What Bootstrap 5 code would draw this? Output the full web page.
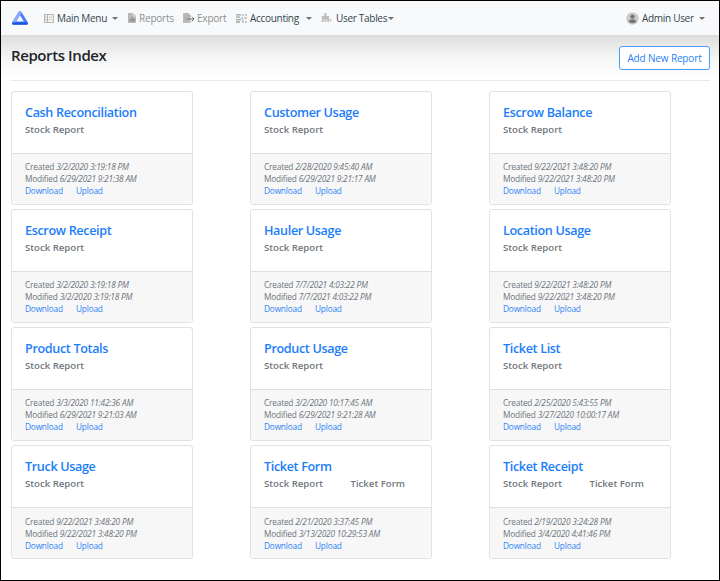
<!DOCTYPE html>
<html lang="en">
<head>
<meta charset="utf-8">
<meta name="viewport" content="width=device-width, initial-scale=1">
<title>Reports Index</title>
<link href="https://cdn.jsdelivr.net/npm/bootstrap@5.3.0/dist/css/bootstrap.min.css" rel="stylesheet">
<style>
body{font-family:"Open Sans","Noto Sans",sans-serif;background:#fff;color:#212529}
.frame{height:581px;border:1px solid #000;overflow:hidden}
.topbar{height:34px;background:#f8f9fb;padding:0 14px 0 10px}
.topbar svg{flex:none}
.topbar .nav-link{font-size:10px;line-height:14px;padding:0;letter-spacing:-.3px;color:#34454f;white-space:nowrap;display:flex;align-items:center}
.topbar .nav-link span{flex:none}
.topbar .nav-link.muted{color:#8c9092;letter-spacing:-.2px}
.caret{width:0;height:0;border:3px solid transparent;border-top-color:#6c7072;border-bottom:0;flex:none}
#n1{margin-left:15px}#n1 span{margin-left:3px;width:55px}
#n2{margin-left:10px}#n2 span{margin-left:3px;width:35px}
#n3{margin-left:9px}#n3 span{margin-left:2px;width:29px}
#n4{margin-left:10px}#n4 span{margin-left:3px;width:56px}
#n5{margin-left:9px}#n5 span{margin-left:4px;width:52px}
#n6 span{margin-left:3px;width:57px}
.page-area{height:545px;padding:0 9px 0 10px;background:linear-gradient(#dcdcdc,#e6e6e6 8px,#f6f6f6 24px,#fff 42px)}
.page-head{height:46px;border-bottom:1px solid #e9e9e9;padding-top:11px}
.page-head h1{font-size:15px;line-height:18px;font-weight:600;letter-spacing:-.4px}
.btn-add{width:91px;height:24px;padding:0;font-size:10px;letter-spacing:-.15px;line-height:22px;border:1px solid #4d9bff;color:#2b83f6;border-radius:3px;background:#fff;white-space:nowrap}
.report-grid{display:grid;grid-template-columns:repeat(3,182px);column-gap:57px;grid-auto-rows:114px;row-gap:4.3px;padding-top:9.6px}
.report-card{border:1px solid #e1e1e1;border-radius:3px;overflow:hidden}
.report-card .card-body{padding:12px 13px 0;height:61px;flex:none}
.report-card h2{font-size:12.6px;line-height:17px;letter-spacing:-.35px;margin:0;font-weight:600;white-space:nowrap}
.report-card h2 a{color:#1a7dfa}
.kind{font-size:9.6px;line-height:14px;font-weight:600;color:#70777d;margin-top:2px;white-space:nowrap}
.kind span{display:inline-block;width:86.5px}
.report-card .card-footer{flex:1;background:#f7f7f7;border-top:1px solid #dfdfdf;padding:7.2px 13px 0;font-size:8.3px;letter-spacing:-.19px;line-height:12px;color:#6c757d;white-space:nowrap}
.report-card .card-footer a{color:#2b83f6;display:inline-block}
.report-card .card-footer a:first-child{width:51px}
</style>
<script src="https://cdn.jsdelivr.net/npm/bootstrap@5.3.0/dist/js/bootstrap.bundle.min.js"></script>
</head>
<body>
<div class="frame">
<nav class="topbar d-flex align-items-center">
<a href="#" class="d-flex" aria-label="Home"><svg width="18" height="16" viewBox="0 0 18 16"><path d="M9 2.5 2.5 13h13z" fill="none" stroke="#4a7dfa" stroke-width="3" stroke-linejoin="round"/><path d="M9 2.5 2.5 13" stroke="#8eaafc" stroke-width="3" stroke-linecap="round"/><path d="M2.5 13.5h13" stroke="#1e54e8" stroke-width="2.6" stroke-linecap="round"/></svg></a>
<a href="#" class="nav-link" id="n1"><svg width="10" height="9" viewBox="0 0 10 9"><path d="M.5.5h9v8h-9z" fill="#f0f0f0" stroke="#b4b4b4"/><path d="M3.5 1v7" stroke="#b4b4b4"/><path d="M5 3h3M5 5.5h3M1 3h2M1 5.5h2" stroke="#cfcfcf"/></svg><span>Main Menu</span><i class="caret"></i></a>
<a href="#" class="nav-link muted" id="n2"><svg width="8" height="10" viewBox="0 0 8 10"><path d="M0 0h5l3 3v7H0z" fill="#b8b8b8"/><path d="M5 0v3h3" fill="none" stroke="#eee" stroke-width=".7"/><path d="M2.2 8.5v-2M4.1 8.5v-4M6 8.5v-3" stroke="#777"/></svg><span>Reports</span></a>
<a href="#" class="nav-link muted" id="n3"><svg width="12" height="10" viewBox="0 0 12 10"><path d="M0 0h5l2.5 2.5V10H0z" fill="#bcbcbc"/><path d="M5 0v3h3M1.5 3h2M1.5 5h2M1.5 7h3" fill="none" stroke="#a6a6a6" stroke-width=".8"/><path d="M4 6h7M8.8 3.8 11 6 8.8 8.2" fill="none" stroke="#737373"/></svg><span>Export</span></a>
<a href="#" class="nav-link" id="n4"><svg width="11" height="9" viewBox="0 0 11 9"><path d="M0 .8h5M0 3.2h4M0 5.6h5M0 8h4" stroke="#a0a0a0" stroke-width="1.3"/><path d="M6 1h2M9 1h2M5 4h2M8 4h3M6 8h2M9 8h2M6 6h1.5" stroke="#8c9ba0" stroke-width="1.2"/></svg><span>Accounting</span><i class="caret"></i></a>
<a href="#" class="nav-link" id="n5"><svg width="11" height="10" viewBox="0 0 11 10"><path d="M3.3 0h2v3H8v6H6.3V6.5h-1V9H3.5V6.5h-1V9H.8V3h2.5z" fill="#bdbdbd"/><path d="M0 8.5h2M8 7h3M9.3 5.8v2.6" stroke="#c4c4c4"/></svg><span>User Tables</span><i class="caret"></i></a>
<a href="#" class="nav-link ms-auto" id="n6"><svg width="13" height="13" viewBox="0 0 13 13"><circle cx="6.5" cy="6.5" r="6.2" fill="#cbcbcb"/><circle cx="6.5" cy="4.6" r="2.2" fill="#747474"/><path d="M2.8 9.7C3 7.6 4.4 7.4 6.5 7.4s3.5.2 3.7 2.3c-1.8 1.9-5.6 1.9-7.4 0z" fill="#747474"/></svg><span>Admin User</span><i class="caret"></i></a>
</nav>
<main class="page-area">
<div class="page-head d-flex justify-content-between"><h1 class="mb-0">Reports Index</h1><button class="btn btn-add">Add New Report</button></div>
<div class="report-grid">
<div class="card report-card"><div class="card-body"><h2><a class="text-decoration-none" href="#">Cash Reconciliation</a></h2><div class="kind"><span>Stock Report</span></div></div><div class="card-footer"><div>Created <em>3/2/2020 3:19:18 PM</em></div><div>Modified <em>6/29/2021 9:21:38 AM</em></div><div><a class="text-decoration-none" href="#">Download</a><a class="text-decoration-none" href="#">Upload</a></div></div></div>
<div class="card report-card"><div class="card-body"><h2><a class="text-decoration-none" href="#">Customer Usage</a></h2><div class="kind"><span>Stock Report</span></div></div><div class="card-footer"><div>Created <em>2/28/2020 9:45:40 AM</em></div><div>Modified <em>6/29/2021 9:21:17 AM</em></div><div><a class="text-decoration-none" href="#">Download</a><a class="text-decoration-none" href="#">Upload</a></div></div></div>
<div class="card report-card"><div class="card-body"><h2><a class="text-decoration-none" href="#">Escrow Balance</a></h2><div class="kind"><span>Stock Report</span></div></div><div class="card-footer"><div>Created <em>9/22/2021 3:48:20 PM</em></div><div>Modified <em>9/22/2021 3:48:20 PM</em></div><div><a class="text-decoration-none" href="#">Download</a><a class="text-decoration-none" href="#">Upload</a></div></div></div>
<div class="card report-card"><div class="card-body"><h2><a class="text-decoration-none" href="#">Escrow Receipt</a></h2><div class="kind"><span>Stock Report</span></div></div><div class="card-footer"><div>Created <em>3/2/2020 3:19:18 PM</em></div><div>Modified <em>3/2/2020 3:19:18 PM</em></div><div><a class="text-decoration-none" href="#">Download</a><a class="text-decoration-none" href="#">Upload</a></div></div></div>
<div class="card report-card"><div class="card-body"><h2><a class="text-decoration-none" href="#">Hauler Usage</a></h2><div class="kind"><span>Stock Report</span></div></div><div class="card-footer"><div>Created <em>7/7/2021 4:03:22 PM</em></div><div>Modified <em>7/7/2021 4:03:22 PM</em></div><div><a class="text-decoration-none" href="#">Download</a><a class="text-decoration-none" href="#">Upload</a></div></div></div>
<div class="card report-card"><div class="card-body"><h2><a class="text-decoration-none" href="#">Location Usage</a></h2><div class="kind"><span>Stock Report</span></div></div><div class="card-footer"><div>Created <em>9/22/2021 3:48:20 PM</em></div><div>Modified <em>9/22/2021 3:48:20 PM</em></div><div><a class="text-decoration-none" href="#">Download</a><a class="text-decoration-none" href="#">Upload</a></div></div></div>
<div class="card report-card"><div class="card-body"><h2><a class="text-decoration-none" href="#">Product Totals</a></h2><div class="kind"><span>Stock Report</span></div></div><div class="card-footer"><div>Created <em>3/3/2020 11:42:36 AM</em></div><div>Modified <em>6/29/2021 9:21:03 AM</em></div><div><a class="text-decoration-none" href="#">Download</a><a class="text-decoration-none" href="#">Upload</a></div></div></div>
<div class="card report-card"><div class="card-body"><h2><a class="text-decoration-none" href="#">Product Usage</a></h2><div class="kind"><span>Stock Report</span></div></div><div class="card-footer"><div>Created <em>3/2/2020 10:17:45 AM</em></div><div>Modified <em>6/29/2021 9:21:28 AM</em></div><div><a class="text-decoration-none" href="#">Download</a><a class="text-decoration-none" href="#">Upload</a></div></div></div>
<div class="card report-card"><div class="card-body"><h2><a class="text-decoration-none" href="#">Ticket List</a></h2><div class="kind"><span>Stock Report</span></div></div><div class="card-footer"><div>Created <em>2/25/2020 5:43:55 PM</em></div><div>Modified <em>3/27/2020 10:00:17 AM</em></div><div><a class="text-decoration-none" href="#">Download</a><a class="text-decoration-none" href="#">Upload</a></div></div></div>
<div class="card report-card"><div class="card-body"><h2><a class="text-decoration-none" href="#">Truck Usage</a></h2><div class="kind"><span>Stock Report</span></div></div><div class="card-footer"><div>Created <em>9/22/2021 3:48:20 PM</em></div><div>Modified <em>9/22/2021 3:48:20 PM</em></div><div><a class="text-decoration-none" href="#">Download</a><a class="text-decoration-none" href="#">Upload</a></div></div></div>
<div class="card report-card"><div class="card-body"><h2><a class="text-decoration-none" href="#">Ticket Form</a></h2><div class="kind"><span>Stock Report</span>Ticket Form</div></div><div class="card-footer"><div>Created <em>2/21/2020 3:37:45 PM</em></div><div>Modified <em>3/13/2020 10:29:53 AM</em></div><div><a class="text-decoration-none" href="#">Download</a><a class="text-decoration-none" href="#">Upload</a></div></div></div>
<div class="card report-card"><div class="card-body"><h2><a class="text-decoration-none" href="#">Ticket Receipt</a></h2><div class="kind"><span>Stock Report</span>Ticket Form</div></div><div class="card-footer"><div>Created <em>2/19/2020 3:24:28 PM</em></div><div>Modified <em>3/4/2020 4:41:46 PM</em></div><div><a class="text-decoration-none" href="#">Download</a><a class="text-decoration-none" href="#">Upload</a></div></div></div>
</div>
</main>
</div>
</body>
</html>
